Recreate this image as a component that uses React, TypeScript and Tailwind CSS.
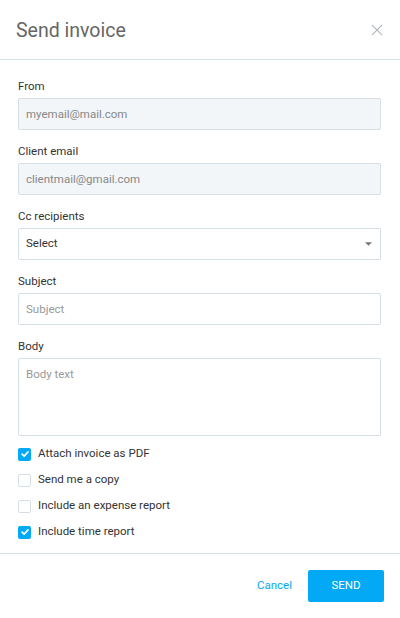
import { useState } from "react";

const inputClassName =
  "h-8 w-full rounded-[2px] border border-[#d5dfe5] px-[7px] text-[11.5px] text-[#333] outline-none placeholder:text-[#999]";

const labelClassName = "mb-1 block h-4 text-[11.5px] leading-4 text-[#333]";

type CheckItem = { id: string; label: string; done: boolean };

function Field({ label, children }: { label: string; children: React.ReactNode }) {
  return (
    <div className="mb-[13px]">
      <label className={labelClassName}>{label}</label>
      {children}
    </div>
  );
}

function CheckRow({ item, onToggle }: { item: CheckItem; onToggle: () => void }) {
  return (
    <button type="button" onClick={onToggle} className="flex h-[26px] items-center gap-[7px] text-left">
      {item.done ? (
        <span className="flex size-[13px] items-center justify-center rounded-[2px] bg-[#03a9f4]">
          <svg viewBox="0 0 12 12" className="size-[10px]" fill="none" stroke="white" strokeWidth="2" strokeLinecap="round" strokeLinejoin="round">
            <path d="M2.5 6.2 5 8.6 9.6 3.4" />
          </svg>
        </span>
      ) : (
        <span className="size-[13px] rounded-[2px] border border-[#d5dfe5] bg-white" />
      )}
      <span className="text-[11.5px] text-[#333]">{item.label}</span>
    </button>
  );
}

export default function App() {
  const [items, setItems] = useState<CheckItem[]>([
    { id: "pdf", label: "Attach invoice as PDF", done: true },
    { id: "copy", label: "Send me a copy", done: false },
    { id: "expense", label: "Include an expense report", done: false },
    { id: "time", label: "Include time report", done: true },
  ]);

  function toggle(id: string) {
    setItems(items.map((item) => (item.id === id ? { ...item, done: !item.done } : item)));
  }

  return (
    <div className="flex h-[618px] w-[400px] flex-col bg-white font-['Roboto',sans-serif]">
      <div className="flex h-[60px] shrink-0 items-center justify-between border-b border-[#d5dfe5] pl-4 pr-[17px]">
        <h1 className="pt-[2px] text-[19.5px] font-normal text-[#666]">Send invoice</h1>
        <button type="button" aria-label="Close" className="text-[#aab4bb]">
          <svg viewBox="0 0 14 14" className="size-[12px]" fill="none" stroke="currentColor" strokeWidth="1.2">
            <path d="M1 1 13 13M13 1 1 13" />
          </svg>
        </button>
      </div>

      <div className="flex-1 pl-[18px] pr-[19px] pt-[18px]">
        <Field label="From">
          <input className={`${inputClassName} bg-[#f2f6f9] text-[#888]`} defaultValue="myemail@mail.com" readOnly />
        </Field>
        <Field label="Client email">
          <input className={`${inputClassName} bg-[#f2f6f9] text-[#888]`} defaultValue="clientmail@gmail.com" readOnly />
        </Field>
        <Field label="Cc recipients">
          <div className={`${inputClassName} flex items-center justify-between bg-white pr-[8px]`}>
            <span>Select</span>
            <svg viewBox="0 0 8 4" className="h-[4px] w-[7px]" fill="#777">
              <path d="M0 0h8L4 4z" />
            </svg>
          </div>
        </Field>
        <Field label="Subject">
          <input className={`${inputClassName} bg-white`} placeholder="Subject" />
        </Field>
        <div>
          <label className={labelClassName}>Body</label>
          <textarea
            className="block h-[78px] w-full resize-none rounded-[2px] border border-[#d5dfe5] px-[7px] py-[7px] text-[11.5px] text-[#333] outline-none placeholder:text-[#999]"
            placeholder="Body text"
          />
        </div>

        <div className="mt-[5px] flex flex-col">
          {items.map((item) => (
            <CheckRow key={item.id} item={item} onToggle={() => toggle(item.id)} />
          ))}
        </div>
      </div>

      <div className="flex h-[65px] shrink-0 items-center justify-end gap-4 border-t border-[#d5dfe5] pr-4">
        <button type="button" className="text-[11.5px] text-[#03a9f4]">
          Cancel
        </button>
        <button type="button" className="h-8 w-[76px] rounded-[2px] bg-[#03a9f4] text-[11.5px] text-white">
          SEND
        </button>
      </div>
    </div>
  );
}
